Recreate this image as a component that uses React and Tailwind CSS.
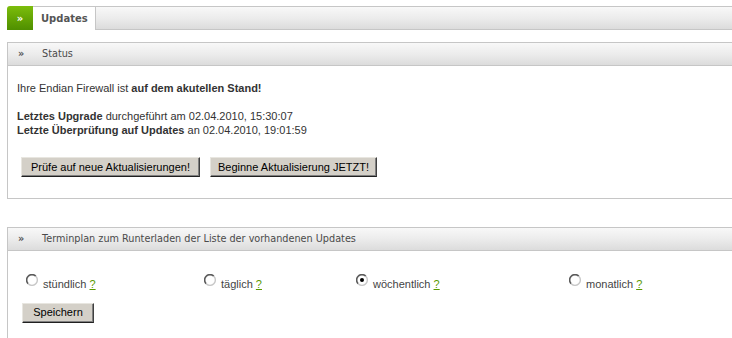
import React from 'react';

const Radio = ({ checked }) => (
  <svg width="12" height="12" viewBox="0 0 12 12" className="shrink-0">
    <circle cx="6" cy="6" r="5" fill="#ffffff" />
    <path d="M2.2 9.8 A5.3 5.3 0 0 1 9.8 2.2" fill="none" stroke="#5a5a5a" strokeWidth="1.6" />
    <path d="M2.2 9.8 A5.3 5.3 0 0 0 9.8 2.2" fill="none" stroke="#c8c8c8" strokeWidth="1.4" />
    {checked && <circle cx="6" cy="6" r="2" fill="#000000" />}
  </svg>
);

const Help = () => <span className="text-[#5a9a00] underline">?</span>;

const PanelHeader = ({ title }) => (
  <div className="h-[23px] flex items-center border-b border-[#c6c6c6] bg-gradient-to-b from-[#f8f8f8] via-[#ececec] to-[#dcdcdc] font-['DejaVu_Sans',sans-serif] text-[9.7px] text-[#4a4a4a]">
    <span className="w-[34px] pl-[10px] font-bold text-[#555]">»</span>
    <span>{title}</span>
  </div>
);

const Button = ({ children, className = '' }) => (
  <button
    className={`h-[20px] whitespace-nowrap bg-[#d4d0c8] border border-t-[#e8e6e0] border-l-[#e8e6e0] border-r-[#404040] border-b-[#202020] shadow-[inset_-1px_-1px_0_#808080] text-[11px] text-black font-['Liberation_Sans',Arial,sans-serif] ${className}`}
  >
    {children}
  </button>
);

export default function App() {
  const options = [
    { label: 'stündlich', checked: false },
    { label: 'täglich', checked: false },
    { label: 'wöchentlich', checked: true },
    { label: 'monatlich', checked: false },
  ];

  return (
    <div className="w-[732px] h-[338px] bg-white overflow-hidden font-['Liberation_Sans',Arial,sans-serif] text-[11px] text-[#333]">
      {/* Tab bar */}
      <div className="pt-[6px] pl-[7px] flex">
        <div className="w-[26px] h-[24px] rounded-tl-[3px] bg-gradient-to-b from-[#7cbd0c] to-[#4f8f00] flex items-center justify-center text-white font-bold text-[10px] font-['DejaVu_Sans',sans-serif]">
          »
        </div>
        <div className="w-[63px] h-[24px] border-t border-r border-[#c6c6c6] bg-white flex items-center pl-[8px] font-['DejaVu_Sans',sans-serif] font-bold text-[10px] text-[#555]">
          Updates
        </div>
        <div className="flex-1 h-[24px] border-t border-b border-[#c6c6c6] bg-gradient-to-b from-[#f8f8f8] via-[#ececec] to-[#dcdcdc]" />
      </div>

      {/* Status */}
      <div className="mt-[12px] ml-[7px] w-[740px] h-[157px] border border-[#c6c6c6]">
        <PanelHeader title="Status" />
        <div className="pl-[9px] pt-[15px]">
          <p className="leading-[14px]">
            Ihre Endian Firewall ist <b>auf dem akutellen Stand!</b>
          </p>
          <p className="leading-[14px] mt-[14px]">
            <b>Letztes Upgrade</b> durchgeführt am 02.04.2010, 15:30:07
          </p>
          <p className="leading-[14px]">
            <b>Letzte Überprüfung auf Updates</b> an 02.04.2010, 19:01:59
          </p>
          <div className="flex gap-[10px] mt-[20px] ml-[4px]">
            <Button className="w-[179px]">Prüfe auf neue Aktualisierungen!</Button>
            <Button className="w-[167px]">Beginne Aktualisierung JETZT!</Button>
          </div>
        </div>
      </div>

      {/* Terminplan */}
      <div className="mt-[28px] ml-[7px] w-[740px] h-[150px] border border-[#c6c6c6]">
        <PanelHeader title="Terminplan zum Runterladen der Liste der vorhandenen Updates" />
        <div className="pl-[18px] pt-[23px]">
          <div className="grid grid-cols-[178px_152px_213px_1fr]">
            {options.map((o) => (
              <div key={o.label} className="flex items-start gap-[5px]">
                <Radio checked={o.checked} />
                <span className="mt-[2px] text-[#444]">
                  {o.label} <Help />
                </span>
              </div>
            ))}
          </div>
          <Button className="w-[72px] mt-[10px] ml-[-4px]">Speichern</Button>
        </div>
      </div>
    </div>
  );
}
